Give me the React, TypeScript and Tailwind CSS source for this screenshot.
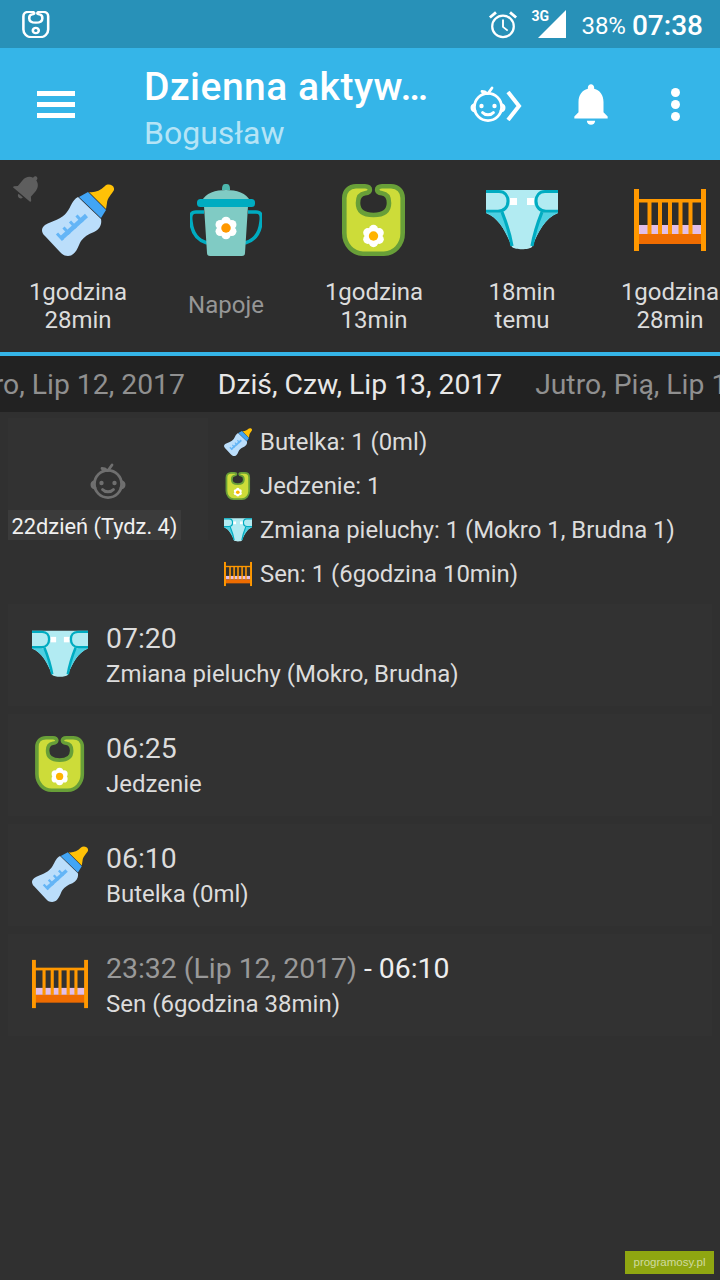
import { Fragment } from 'react'

type IconProps = { size?: number }

const BIB_PATH =
    'M18 2.3 H27 C30.5 2.3 32 4 31.9 5.8 C31.8 8 29.5 9 27 9.3 C23 9.8 20 13 20 19 C20 27 25 31 35.5 31 C46 31 51 27 51 19 C51 13 48 9.8 44 9.3 C41.5 9 39.2 8 39.1 5.8 C39 4 40.5 2.3 44 2.3 H53 C60 2.3 64.7 7 64.7 14 V49 C64.7 61 56 69.7 46 69.7 H25 C15 69.7 6.3 61 6.3 49 V14 C6.3 7 11 2.3 18 2.3 Z'

function Flower({ cx, cy, r, core }: { cx: number; cy: number; r: number; core: string }) {
    const petals = [0, 60, 120, 180, 240, 300]
    return (
        <g>
            {petals.map((a) => (
                <circle
                    key={a}
                    cx={cx + Math.sin((a * Math.PI) / 180) * r}
                    cy={cy - Math.cos((a * Math.PI) / 180) * r}
                    r={r * 0.72}
                    fill="#fff"
                />
            ))}
            <circle cx={cx} cy={cy} r={r * 0.72} fill={core} />
        </g>
    )
}

function BottleIcon({ size = 72 }: IconProps) {
    return (
        <svg width={size} height={size} viewBox="0 0 72 72">
            <path d="M47 8 C52 9 58 7 63 2 C66 -1 73 1 72 6 C70 10 65 14 65 19 L64 25 Z" fill="#ffc107" />
            <path d="M36 13 L59 35 C60 40 58 45 52 48 C46 50 42 53 39 57 C36 62 34 72 26 72 C22 72 20 70 18 68 L3 52 C-1 48 -1 44 3 41 C10 37 20 35 25 28 C29 23 30 16 36 13 Z" fill="#bbdefb" />
            <path d="M37 13 L46 8 L64 26 L59 34 Z" fill="#42a5f5" />
            <path d="M19 54.5 L44.5 31.5" fill="none" stroke="#64b5f6" strokeWidth="4.5" />
            <path d="M21 56 L15 49.5 M27.5 50 L21.5 43.5 M34 44 L28 37.5 M40.5 38 L34.5 31.5" fill="none" stroke="#64b5f6" strokeWidth="3" />
        </svg>
    )
}

function CupIcon({ size = 72 }: IconProps) {
    return (
        <svg width={size} height={size} viewBox="0 0 72 72">
            <path d="M14 28 H6 C1 28 0 31 1 38 C2 48 6 56 17 59 M58 28 H66 C71 28 72 31 71 38 C70 48 66 56 55 59" fill="none" stroke="#00acc1" strokeWidth="3.6" />
            <path d="M32 6 C32 1 33 0 36 0 C39 0 40 1 40 6 Z" fill="#4db6ac" />
            <path d="M12 17 C15 9 26 6 36 6 C46 6 57 9 60 17 Z" fill="#80cbc4" />
            <path d="M14 22 H58 L55 69 C55 71 54 72 52 72 H20 C18 72 17 71 17 69 Z" fill="#80cbc4" />
            <rect x="7" y="15" width="58" height="8" rx="3.5" fill="#00acc1" />
            <Flower cx={36} cy={44} r={6.6} core="#ff9800" />
        </svg>
    )
}

function BibIcon({ size = 72 }: IconProps) {
    return (
        <svg width={size} height={size} viewBox="0 0 72 72">
            <path d={BIB_PATH} fill="#cddc39" stroke="#689f38" strokeWidth="4.6" />
            <Flower cx={35.5} cy={52} r={6.5} core="#ffb300" />
        </svg>
    )
}

function DiaperIcon({ size = 72 }: IconProps) {
    return (
        <svg width={size} height={size} viewBox="0 0 72 72">
            <path d="M0 6 H72 V29 C59 34 52 48 46 63 C43 66 29 66 26 63 C20 48 13 34 0 29 Z" fill="#b2ebf2" />
            <path d="M0 29 H16 C20 38 24 50 26 63 C20 48 13 34 0 29 Z M72 29 H56 C52 38 48 50 46 63 C52 48 59 34 72 29 Z" fill="#4dd0e1" />
            <path d="M0 7.5 H13 C19 7.5 22 12 22 17 C22 23 18 27.3 12 27.3 H0 M72 7.5 H59 C53 7.5 50 12 50 17 C50 23 54 27.3 60 27.3 H72" fill="none" stroke="#00acc1" strokeWidth="3" />
            <path d="M16 28 C20 38 24 50 26 62 M56 28 C52 38 48 50 46 62" fill="none" stroke="#00acc1" strokeWidth="3.2" />
            <rect x="24" y="14" width="7" height="7" fill="#fff" />
            <rect x="41" y="14" width="7" height="7" fill="#fff" />
        </svg>
    )
}

function CribIcon({ size = 72 }: IconProps) {
    const bars = [13.5, 24, 34, 44.5, 54.5]
    return (
        <svg width={size} height={size} viewBox="0 0 72 72">
            <rect x="4" y="41" width="64" height="9" fill="#e1bee7" />
            <rect x="4" y="15" width="64" height="3.5" fill="#ff9800" />
            {bars.map((x) => (
                <rect key={x} x={x} y="17" width="4" height="33" fill="#ff9800" />
            ))}
            <rect x="4" y="50" width="64" height="10" fill="#ef6c00" />
            <rect x="0" y="5" width="5" height="62" fill="#ff9800" />
            <rect x="67" y="5" width="5" height="62" fill="#ff9800" />
        </svg>
    )
}

function BabyFace({ size = 36, color = '#fff' }: { size?: number; color?: string }) {
    return (
        <svg width={size} height={size} viewBox="0 0 36 36" fill="none" stroke={color} strokeWidth="2.8" strokeLinecap="round">
            <circle cx="18" cy="21" r="13.6" />
            <path d="M4.5 18.5 C1 19.5 1 24.5 5 25 M31.5 18.5 C35 19.5 35 24.5 31 25" />
            <path d="M17 7.5 C15.5 6 13.5 5.5 12 5.5 M18 7.5 L22 2" />
            <path d="M12.5 26.5 C15 29.5 21 29.5 23.5 26.5" />
            <circle cx="11.5" cy="20" r="2.2" fill={color} stroke="none" />
            <circle cx="24.5" cy="20" r="2.2" fill={color} stroke="none" />
        </svg>
    )
}

function FilledBell({ size = 50, color = '#fff' }: { size?: number; color?: string }) {
    return (
        <svg width={size} height={size} viewBox="0 0 24 24" fill={color}>
            <path d="M12 22c1.1 0 2-.9 2-2h-4c0 1.1.89 2 2 2zm6-6v-5c0-3.07-1.64-5.64-4.5-6.32V4c0-.83-.67-1.5-1.5-1.5s-1.5.67-1.5 1.5v.68C7.63 5.36 6 7.92 6 11v5l-2 2v1h16v-1l-2-2z" />
        </svg>
    )
}

function StatusBar() {
    return (
        <div className="h-[48px] bg-[#2891b8] flex items-center pl-[22px] pr-[17px] text-white">
            <svg width="28" height="27" viewBox="3 0 66 72" preserveAspectRatio="none" fill="none" stroke="#fff" strokeWidth="6">
                <path d={BIB_PATH} />
                <circle cx="35.5" cy="52" r="7" />
            </svg>
            <div className="ml-auto flex items-center">
                <svg width="30" height="30" viewBox="0 0 32 32" fill="none" stroke="#fff" strokeWidth="2.4" className="mr-[18px] mt-[2px]">
                    <circle cx="16" cy="17.5" r="11.5" />
                    <path d="M16 10 V18 L21 22" strokeWidth="2" />
                    <path d="M2 8 L8.5 2.5 M30 8 L23.5 2.5" strokeWidth="3" />
                </svg>
                <div className="relative w-[36px] h-[36px] mr-[9px]">
                    <svg width="36" height="36" viewBox="0 0 36 36">
                        <polygon points="30,4 30,32 2,32" fill="#fff" />
                    </svg>
                    <span className="absolute left-[-5px] top-[1px] text-[14px] leading-[18px] font-bold">3G</span>
                </div>
                <span className="text-[24px] leading-none mr-[6px] pt-[3px]">38%</span>
                <span className="text-[28px] leading-none font-medium pt-[3px]">07:38</span>
            </div>
        </div>
    )
}

function AppBar() {
    return (
        <div className="h-[112px] bg-[#35b5e8] flex items-center relative">
            <div className="w-[38px] ml-[37px] flex flex-col gap-[6px]">
                <div className="h-[5px] bg-white" />
                <div className="h-[5px] bg-white" />
                <div className="h-[5px] bg-white" />
            </div>
            <div className="ml-[69px] w-[329px] pt-[8px]">
                <div className="text-[39px] leading-[46px] tracking-[0.5px] font-medium text-white whitespace-nowrap">Dzienna aktyw…</div>
                <div className="mt-[4px] text-[32px] leading-[38px] text-[#b5e4f6]">Bogusław</div>
            </div>
            <div className="flex items-center ml-[-3px]">
                <BabyFace size={36} />
                <svg width="16" height="30" viewBox="0 0 16 30" fill="none" stroke="#fff" strokeWidth="4" className="mt-[4px]">
                    <path d="M2 1 L13 15 L2 29" />
                </svg>
            </div>
            <div className="ml-[44px]">
                <FilledBell size={50} />
            </div>
            <div className="ml-[55px] flex flex-col gap-[3px]">
                <div className="w-[9px] h-[9px] rounded-full bg-white" />
                <div className="w-[9px] h-[9px] rounded-full bg-white" />
                <div className="w-[9px] h-[9px] rounded-full bg-white" />
            </div>
        </div>
    )
}

const tiles = [
    { Icon: BottleIcon, lines: ['1godzina', '28min'] },
    { Icon: CupIcon, lines: ['Napoje'], muted: true },
    { Icon: BibIcon, lines: ['1godzina', '13min'] },
    { Icon: DiaperIcon, lines: ['18min', 'temu'] },
    { Icon: CribIcon, lines: ['1godzina', '28min'] },
]

function Tiles() {
    return (
        <div className="h-[192px] bg-[#2d2d2d] flex pl-[4px] overflow-hidden relative">
            <div className="absolute left-[11px] top-[10px] rotate-[40deg]">
                <FilledBell size={34} color="#5e5e5e" />
            </div>
            {tiles.map(({ Icon, lines, muted }, i) => (
                <div key={i} className="w-[148px] shrink-0 flex flex-col items-center pt-[24px]">
                    <Icon size={72} />
                    <div className={`mt-[22px] h-[56px] flex flex-col justify-center text-[24px] leading-[28px] text-center whitespace-nowrap ${muted ? 'text-[#969696] pb-[2px]' : 'text-[#dcdcdc]'}`}>
                        {lines.map((l) => (
                            <div key={l}>{l}</div>
                        ))}
                    </div>
                </div>
            ))}
        </div>
    )
}

function DateStrip() {
    return (
        <div className="h-[60px] border-t-[4px] border-[#35b5e8] bg-[#222222] flex items-center pt-[2px] text-[28.3px] overflow-hidden whitespace-nowrap">
            <div className="flex-1 min-w-0 flex justify-end overflow-hidden text-[#909090]">
                <span className="shrink-0">Śro, Lip 12, 2017</span>
            </div>
            <span className="shrink-0 mx-[33px] text-[#e8e8e8]">Dziś, Czw, Lip 13, 2017</span>
            <div className="flex-1 min-w-0 overflow-hidden text-[#909090]">
                <span>Jutro, Pią, Lip 14, 2017</span>
            </div>
        </div>
    )
}

const summary = [
    { Icon: BottleIcon, text: 'Butelka: 1 (0ml)' },
    { Icon: BibIcon, text: 'Jedzenie: 1' },
    { Icon: DiaperIcon, text: 'Zmiana pieluchy: 1 (Mokro 1, Brudna 1)' },
    { Icon: CribIcon, text: 'Sen: 1 (6godzina 10min)' },
]

function Summary() {
    return (
        <div className="flex pt-[6px] pl-[8px] h-[192px]">
            <div className="w-[200px] h-[122px] bg-[#323232] flex flex-col">
                <div className="flex-1 flex items-center justify-center pt-[34px]">
                    <BabyFace size={36} color="#6f6f6f" />
                </div>
                <div className="w-[173px] h-[30px] bg-[#3b3b3b] text-[21.8px] leading-[34px] text-[#f0f0f0] text-center whitespace-nowrap">
                    22dzień (Tydz. 4)
                </div>
            </div>
            <div className="pl-[16px] flex flex-col pt-[2px]">
                {summary.map(({ Icon, text }) => (
                    <div key={text} className="h-[44px] flex items-center">
                        <Icon size={28} />
                        <span className="ml-[8px] pt-[2px] text-[23.9px] text-[#dcdcdc] whitespace-nowrap">{text}</span>
                    </div>
                ))}
            </div>
        </div>
    )
}

const rows = [
    { Icon: DiaperIcon, time: '07:20', desc: 'Zmiana pieluchy (Mokro, Brudna)' },
    { Icon: BibIcon, time: '06:25', desc: 'Jedzenie' },
    { Icon: BottleIcon, time: '06:10', desc: 'Butelka (0ml)' },
    { Icon: CribIcon, time: null, desc: 'Sen (6godzina 38min)' },
]

function Rows() {
    return (
        <div className="flex flex-col gap-[8px] mx-[8px]">
            {rows.map(({ Icon, time, desc }) => (
                <div key={desc} className="h-[102px] bg-[#323232] flex items-start pl-[24px] pt-[16px]">
                    <div className="mt-[6px]">
                        <Icon size={56} />
                    </div>
                    <div className="ml-[18px]">
                        <div className="text-[28.4px] leading-[36px] h-[35px] pt-[1px] text-[#dcdcdc] whitespace-nowrap">
                            {time ?? (
                                <Fragment>
                                    <span className="text-[#999999]">23:32 (Lip 12, 2017)</span>
                                    <span className="text-[#eeeeee]"> - 06:10</span>
                                </Fragment>
                            )}
                        </div>
                        <div className="text-[24px] leading-[36px] pt-[1px] text-[#dcdcdc]">{desc}</div>
                    </div>
                </div>
            ))}
        </div>
    )
}

export default function App() {
    return (
        <div className="w-[720px] h-[1280px] bg-[#303030] overflow-hidden relative font-[Roboto,sans-serif]">
            <StatusBar />
            <AppBar />
            <Tiles />
            <DateStrip />
            <Summary />
            <Rows />
            {/* watermark sits on top of the page */}
            <div className="absolute right-[6px] bottom-[6px] w-[89px] h-[23px] bg-[#8fa611] text-[#d0dba0] text-[11.5px] leading-[23px] text-center font-['Liberation_Sans',sans-serif]">
                programosy.pl
            </div>
        </div>
    )
}
